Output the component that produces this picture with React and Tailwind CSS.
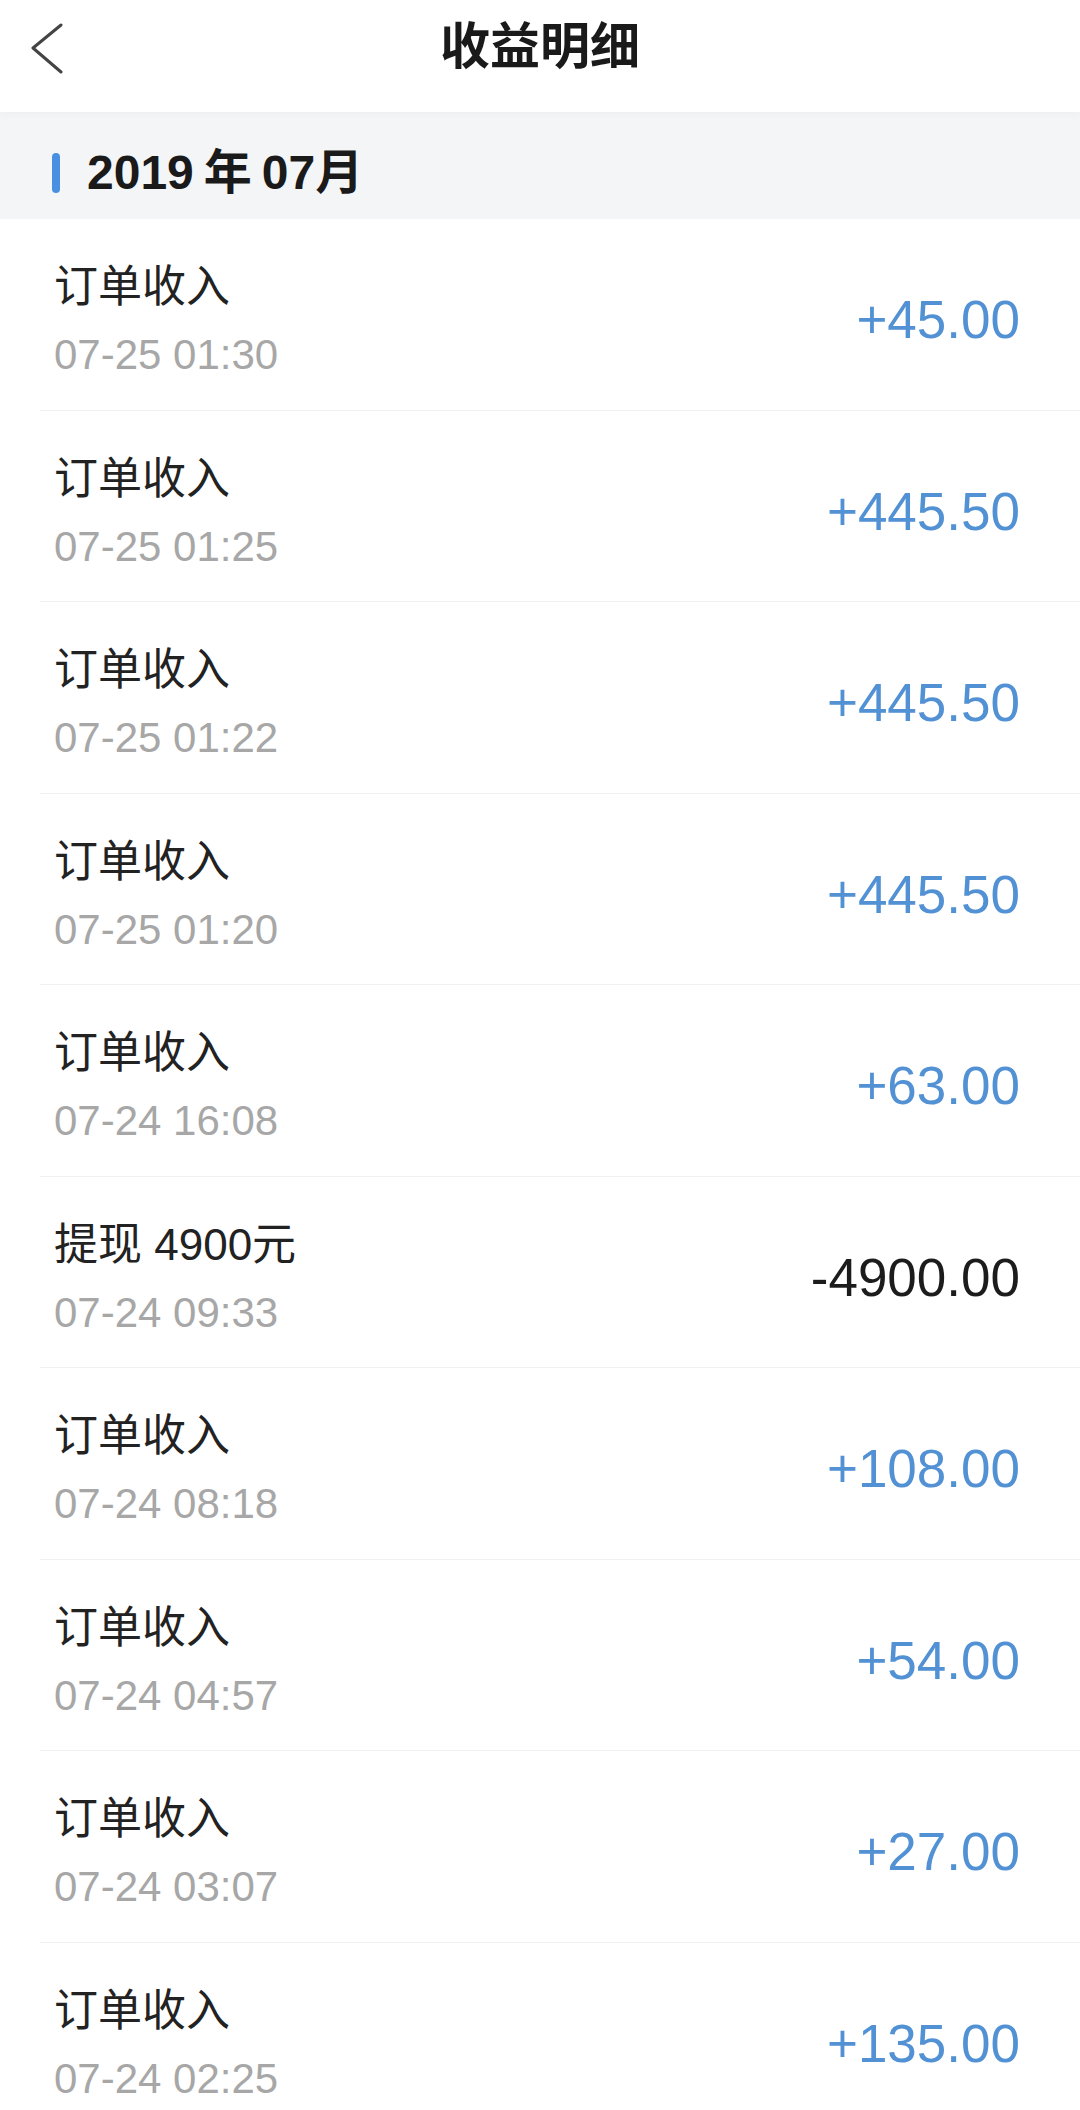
const records = [
  { title: '订单收入', time: '07-25 01:30', amount: '+45.00' },
  { title: '订单收入', time: '07-25 01:25', amount: '+445.50' },
  { title: '订单收入', time: '07-25 01:22', amount: '+445.50' },
  { title: '订单收入', time: '07-25 01:20', amount: '+445.50' },
  { title: '订单收入', time: '07-24 16:08', amount: '+63.00' },
  { title: '提现 4900元', time: '07-24 09:33', amount: '-4900.00' },
  { title: '订单收入', time: '07-24 08:18', amount: '+108.00' },
  { title: '订单收入', time: '07-24 04:57', amount: '+54.00' },
  { title: '订单收入', time: '07-24 03:07', amount: '+27.00' },
  { title: '订单收入', time: '07-24 02:25', amount: '+135.00' },
]

const font = "font-['Liberation_Sans','Noto_Sans_CJK_SC',sans-serif]"

function Row({ title, time, amount }) {
  const negative = amount.startsWith('-')
  return (
    <div className="h-[191.5px] pl-[40px] bg-white">
      <div className="h-full flex items-center justify-between border-b border-[#f0f0f0] pl-[14px] pr-[60px] pt-[12px]">
        <div className="flex flex-col">
          <span className="text-[44px] leading-[62px] text-[#222222]">{title}</span>
          <span className="text-[42px] leading-[58px] mt-[8px] text-[#a7a7a7]">{time}</span>
        </div>
        <span className={`text-[53px] leading-[70px] ${negative ? 'text-[#1c1c1c]' : 'text-[#5291d4]'}`}>
          {amount}
        </span>
      </div>
    </div>
  )
}

export default function App() {
  return (
    <div className={`w-[1080px] h-[2110px] overflow-hidden bg-white ${font}`}>
      {/* header */}
      <div className="relative h-[112px] flex items-center justify-center bg-white shadow-[0_2px_8px_rgba(0,0,0,0.03)] z-10">
        <svg className="absolute left-[31px] top-[23px]" width="34" height="52" viewBox="0 0 34 52" fill="none">
          <polyline points="30,2 2,25 30,49" stroke="#444" strokeWidth="3" strokeLinecap="round" strokeLinejoin="round" />
        </svg>
        <span className="text-[50px] font-semibold text-[#1a1a1a] -mt-[18px]">收益明细</span>
      </div>

      {/* month band */}
      <div className="h-[107px] bg-[#f4f5f7] flex items-center pl-[52px] pt-[14px]">
        <div className="w-[8px] h-[40px] rounded-full bg-[#4a90e2]" />
        <span className="ml-[27px] text-[48px] font-bold text-[#1a1a1a] leading-none">
          2019<span className="mx-[10px]">年</span>07月
        </span>
      </div>

      {records.map((r, i) => (
        <Row key={i} {...r} />
      ))}
    </div>
  )
}
